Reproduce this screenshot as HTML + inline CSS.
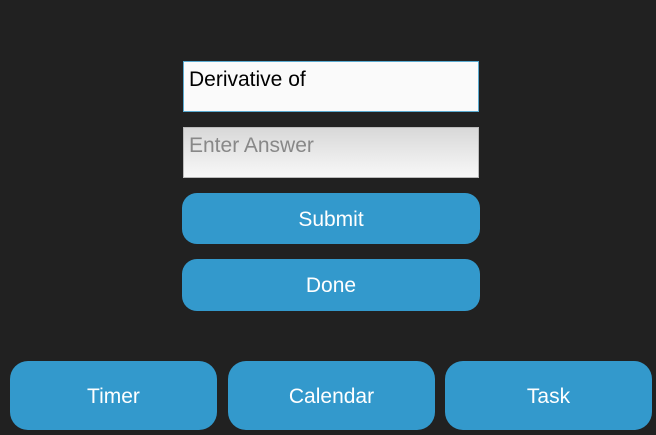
<!DOCTYPE html>
<html><head><style>
body{margin:0;width:656px;height:435px;background:#212121;position:relative;overflow:hidden;font-family:"Liberation Sans",sans-serif}
.f{position:absolute;left:183px;box-sizing:border-box;font-size:21px;padding:6px 0 0 5px}
.b{position:absolute;background:#3399cc;color:#fff;font-size:21px;display:flex;align-items:center;justify-content:center;border-radius:15px;padding-top:2px;box-sizing:border-box}
</style></head><body>
<div class="f" style="top:61px;height:51px;width:296px;background:#fafafa;border:1px solid #5aaad0;color:#000">Derivative of</div>
<div class="f" style="top:127px;height:51px;width:296px;background:linear-gradient(to bottom,#d8d8d8,#f8f8f8);border:1px solid #bbb;color:#888">Enter Answer</div>
<div class="b" style="left:182px;top:193px;width:298px;height:51px">Submit</div>
<div class="b" style="left:182px;top:259px;width:298px;height:52px">Done</div>
<div class="b" style="left:10px;top:361px;width:207px;height:69px;border-radius:18px">Timer</div>
<div class="b" style="left:228px;top:361px;width:207px;height:69px;border-radius:18px">Calendar</div>
<div class="b" style="left:445px;top:361px;width:207px;height:69px;border-radius:18px">Task</div>
</body></html>
